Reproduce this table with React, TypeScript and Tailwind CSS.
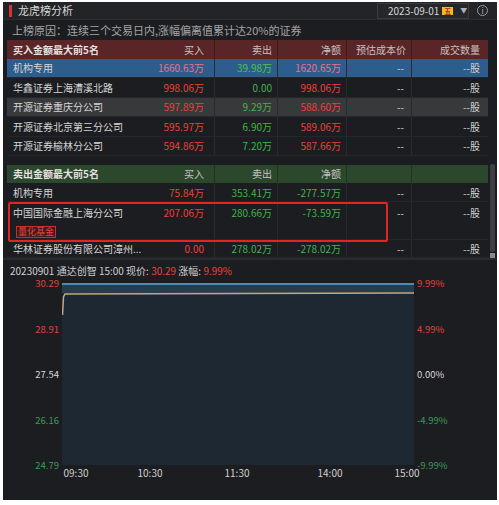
import React from "react";

const FONT = "font-['Noto_Sans_CJK_SC','Noto_Sans',sans-serif]";

type Row = {
  name: string;
  buy: string;
  sell: string;
  net: string;
  bg?: string;
  buyC: string;
  sellC: string;
  netC: string;
};

const buyRows: Row[] = [
  { name: "机构专用", buy: "1660.63万", sell: "39.98万", net: "1620.65万", bg: "bg-[#2c5d8c]", buyC: "text-[#f0708c]", sellC: "text-[#4cc04e]", netC: "text-[#f0708c]" },
  { name: "华鑫证券上海漕溪北路", buy: "998.06万", sell: "0.00", net: "998.06万", buyC: "text-[#ec4038]", sellC: "text-[#3fb54a]", netC: "text-[#ec4038]" },
  { name: "开源证券重庆分公司", buy: "597.89万", sell: "9.29万", net: "588.60万", bg: "bg-[#38393b]", buyC: "text-[#ec4038]", sellC: "text-[#3fb54a]", netC: "text-[#ec4038]" },
  { name: "开源证券北京第三分公司", buy: "595.97万", sell: "6.90万", net: "589.06万", buyC: "text-[#ec4038]", sellC: "text-[#3fb54a]", netC: "text-[#ec4038]" },
  { name: "开源证券榆林分公司", buy: "594.86万", sell: "7.20万", net: "587.66万", buyC: "text-[#ec4038]", sellC: "text-[#3fb54a]", netC: "text-[#ec4038]" },
];

const COLS = "grid grid-cols-[140px_68px_63px_69px_65px_76px]";

function DataRow({ r, h = "h-[19.5px]" }: { r: Row; h?: string }) {
  return (
    <div className={`${COLS} ${h} ${r.bg ?? ""} border-b border-[#25262a] text-[10px] items-center`}>
      <div className="pl-[6px] text-[#d6d6d6] truncate">{r.name}</div>
      <div className={`text-right pr-[10px] border-r border-[#2a2b2f] h-full flex items-center justify-end ${r.buyC}`}>{r.buy}</div>
      <div className={`text-right pr-[5px] border-r border-[#2a2b2f] h-full flex items-center justify-end ${r.sellC}`}>{r.sell}</div>
      <div className={`text-right pr-[5px] border-r border-[#2a2b2f] h-full flex items-center justify-end ${r.netC}`}>{r.net}</div>
      <div className="text-right pr-[7px] border-r border-[#2a2b2f] h-full flex items-center justify-end text-[#d0d0d0]">--</div>
      <div className="text-right pr-[8px] h-full flex items-center justify-end text-[#d0d0d0]">--股</div>
    </div>
  );
}

function HeaderRow({ title, bg, line, extra }: { title: string; bg: string; line: string; extra: boolean }) {
  return (
    <div className={`${COLS} h-[18.5px] ${bg} text-[10px] items-center text-[#c8c0c0]`}>
      <div className={`pl-[6px] font-bold text-[#e8e0e0] h-full flex items-center`}>{title}</div>
      <div className={`pr-[10px] h-full flex items-center justify-end border-r ${line}`}>买入</div>
      <div className={`pr-[5px] h-full flex items-center justify-end border-r ${line}`}>卖出</div>
      <div className={`pr-[5px] h-full flex items-center justify-end border-r ${line}`}>净额</div>
      <div className={`pr-[5px] h-full flex items-center justify-end border-r ${line}`}>{extra ? "预估成本价" : ""}</div>
      <div className="pr-[8px] h-full flex items-center justify-end">{extra ? "成交数量" : ""}</div>
    </div>
  );
}

export default function App() {
  return (
    <div className={`w-[499px] h-[505px] bg-white pt-[2px] pl-[3px] ${FONT}`}>
      <div className="w-[494px] h-[498px] bg-[#1c1d21] flex flex-col">
        {/* Title row */}
        <div className="h-[18px] bg-[#232428] flex items-center pl-[6px] pr-[9px] border-b border-[#2b2c30]">
          <div className="w-[3px] h-[12px] bg-[#d8322c]" />
          <div className="ml-[6px] text-[11px] text-[#d8d8d8] leading-none">龙虎榜分析</div>
          <div className="ml-auto flex items-center">
            <div className="w-[92px] h-[16px] border border-[#3a3b40] bg-[#26272b] flex items-center pl-[10px] text-[10px] text-[#d8d8d8] leading-none whitespace-nowrap">
              <span>2023-09-01</span>
              <span className="ml-[3px] w-[11px] h-[8px] bg-[#e8c21c] text-[7px] leading-[8px] text-[#b02020] text-center font-bold">五</span>
              <span className="ml-[7px] text-[7px] text-[#b0b0b0]">▼</span>
            </div>
            <div className="ml-[8px] w-[11px] h-[11px] rounded-full border border-[#9a9a9a] flex items-center justify-center text-[8px] text-[#b0b0b0] leading-none">i</div>
          </div>
        </div>
        {/* Reason */}
        <div className="h-[20px] flex items-center pl-[9px] text-[11px] text-[#a5a5a5]">
          上榜原因：连续三个交易日内,涨幅偏离值累计达20%的证券
        </div>
        {/* Table + scrollbar */}
        <div className="flex pl-[4px]">
          <div className="w-[481px]">
            <HeaderRow title="买入金额最大前5名" bg="bg-[#5a2526]" line="border-[#3f1a1b]" extra />
            {buyRows.map((r) => (
              <DataRow key={r.name} r={r} />
            ))}
            <div className="h-[8.5px]" />
            <HeaderRow title="卖出金额最大前5名" bg="bg-[#2b482d]" line="border-[#1f3421]" extra={false} />
            <DataRow
              r={{ name: "机构专用", buy: "75.84万", sell: "353.41万", net: "-277.57万", buyC: "text-[#ec4038]", sellC: "text-[#3fb54a]", netC: "text-[#3fb54a]" }}
              h="h-[19px]"
            />
            {/* Tall highlighted row */}
            <div className={`${COLS} h-[38px] border-b border-[#25262a] text-[10px] relative`}>
              <div className="pl-[6px] pt-[4px] flex flex-col">
                <span className="text-[#d6d6d6] leading-[14px]">中国国际金融上海分公司</span>
                <span className="mt-[6px] ml-[3px] w-[40px] h-[12px] border border-[#c8302a] bg-[#3a1c1c] text-[#e8423c] text-[9px] leading-[10px] text-center">量化基金</span>
              </div>
              <div className="pr-[10px] pt-[4px] text-right leading-[14px] border-r border-[#2a2b2f] text-[#ec4038]">207.06万</div>
              <div className="pr-[5px] pt-[4px] text-right leading-[14px] border-r border-[#2a2b2f] text-[#3fb54a]">280.66万</div>
              <div className="pr-[5px] pt-[4px] text-right leading-[14px] border-r border-[#2a2b2f] text-[#3fb54a]">-73.59万</div>
              <div className="pr-[7px] pt-[4px] text-right leading-[14px] border-r border-[#2a2b2f] text-[#d0d0d0]">--</div>
              <div className="pr-[8px] pt-[4px] text-right leading-[14px] text-[#d0d0d0]">--股</div>
              <div className="absolute left-[1px] top-[0px] w-[380px] h-[40px] border-2 border-[#e0261f] rounded-[2px] pointer-events-none" />
            </div>
            <DataRow
              r={{ name: "华林证券股份有限公司漳州...", buy: "0.00", sell: "278.02万", net: "-278.02万", buyC: "text-[#ec4038]", sellC: "text-[#3fb54a]", netC: "text-[#3fb54a]" }}
              h="h-[18px]"
            />
          </div>
          <div className="w-[9px] flex flex-col">
            <div className="h-[124px]" />
            <div className="mx-[2px] w-[5px] flex-1 bg-[#3e3f43] rounded-[2px]" />
            <div className="mx-[2px] mt-[1px] w-[5px] h-[5px] bg-[#8a8a8a]" />
          </div>
        </div>
        <div className="h-[2px] bg-[#2a2b2f]" />
        {/* Chart section */}
        <div className="flex-1 flex flex-col">
          <div className="h-[20px] flex items-center pl-[7px] text-[10px] text-[#d0d0d0] whitespace-pre">
            <span>20230901 通达创智 15:00 现价: </span>
            <span className="text-[#ec4038]">30.29</span>
            <span> 涨幅: </span>
            <span className="text-[#ec4038]">9.99%</span>
          </div>
          <div className="flex mt-[3px] h-[182px]">
            <div className="w-[59px] pr-[3px] h-[194px] -mt-[6px] flex flex-col justify-between items-end text-[9.5px] leading-[12px]">
              <span className="text-[#e0423a]">30.29</span>
              <span className="text-[#e0423a]">28.91</span>
              <span className="text-[#d8d8d8]">27.54</span>
              <span className="text-[#3a9a5a]">26.16</span>
              <span className="text-[#3a9a5a]">24.79</span>
            </div>
            <div className="w-[352px] h-[182px] bg-[#1e2833]">
              <svg width="352" height="182" viewBox="0 0 352 182">
                <rect x="0" y="0" width="352" height="10" fill="#293c4c" />
                <line x1="0" y1="1" x2="352" y2="1" stroke="#4d8bb4" strokeWidth="2" />
                <path d="M0.5 32 L1.5 14 L3 11 L352 10" fill="none" stroke="#c2a882" strokeWidth="1.5" />
              </svg>
            </div>
            <div className="pl-[3px] h-[194px] -mt-[6px] flex flex-col justify-between text-[9.5px] leading-[12px]">
              <span className="text-[#e0423a]">9.99%</span>
              <span className="text-[#e0423a]">4.99%</span>
              <span className="text-[#d8d8d8]">0.00%</span>
              <span className="text-[#3a9a5a]">-4.99%</span>
              <span className="text-[#3a9a5a]">-9.99%</span>
            </div>
          </div>
          <div className="flex text-[10px] text-[#d0d0d0] mt-[1px] leading-[14px]">
            <span className="ml-[58px] w-[30px] text-center">09:30</span>
            <span className="ml-[44px] w-[30px] text-center">10:30</span>
            <span className="ml-[57px] w-[30px] text-center">11:30</span>
            <span className="ml-[63px] w-[30px] text-center">14:00</span>
            <span className="ml-[47px] w-[30px] text-center">15:00</span>
          </div>
        </div>
      </div>
    </div>
  );
}
